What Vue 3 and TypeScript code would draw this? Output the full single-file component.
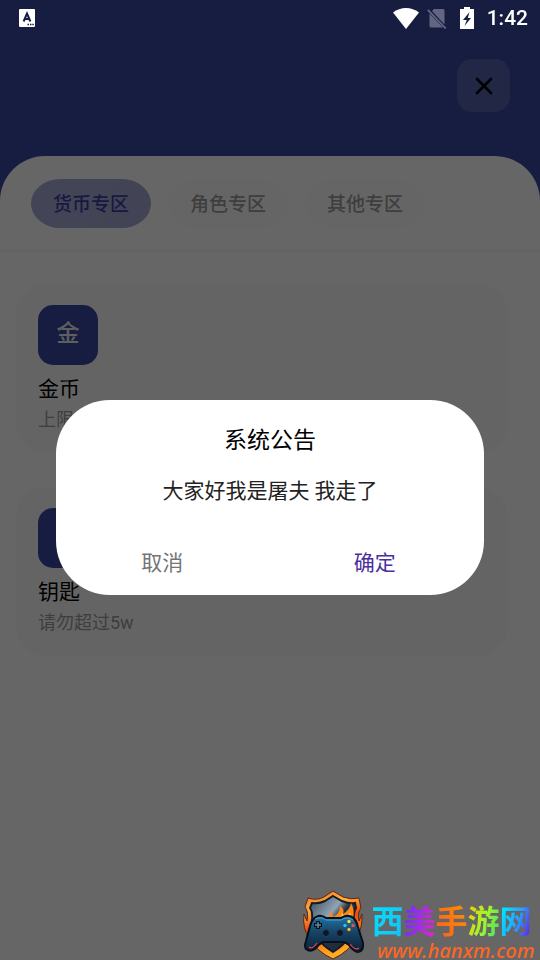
<script setup lang="ts">
import { ref } from 'vue'

interface Item {
  badge: string
  name: string
  hint: string
}

const tabs: string[] = ['货币专区', '角色专区', '其他专区']
const activeTab = ref(0)
const items: Item[] = [
  { badge: '金', name: '金币', hint: '上限999999' },
  { badge: '钥', name: '钥匙', hint: '请勿超过5w' },
]
const noticeOpen = ref(true)
</script>

<template>
  <div class="screen">
    <div class="status">
      <svg width="16" height="18" viewBox="0 0 16 18" aria-hidden="true">
        <rect width="16" height="18" rx="1" fill="#fff" />
        <path d="M4.600 12.500 8 4.600l3.400 7.900M5.800 10h4.400" fill="none" stroke="#171d42" stroke-width="2" />
        <path d="M8.500 15.500h1.500M11 15.500h1.500M13.300 15.500h1.500" stroke="#171d42" stroke-width="1.400" />
      </svg>
      <div class="status-right">
        <svg width="26" height="21" viewBox="0 0 26 21" aria-hidden="true">
          <path d="M0 4.500C7.500-1.500 18.500-1.500 26 4.500L13 21Z" fill="#fff" />
        </svg>
        <svg class="sim" width="20" height="21" viewBox="0 0 20 21" aria-hidden="true">
          <path d="M7 1H16Q17.500 1 17.500 2.500V16.500L5 3ZM2.500 5.500 16 19.500H4Q2.500 19.500 2.500 18Z" fill="#626681" />
          <path d="M.8 1.800 18.800 20.500" stroke="#626681" stroke-width="1.800" />
        </svg>
        <svg class="battery" width="14" height="22" viewBox="0 0 14 22" aria-hidden="true">
          <path d="M4 0h6v2h4v20H0V2h4Z" fill="#fff" />
          <path d="M9.500 5 3 13h3.800L4.500 19 11 11H7.800Z" fill="#171d42" />
        </svg>
        <span class="clock">1:42</span>
      </div>
    </div>

    <header class="header">
      <button class="close" type="button" aria-label="关闭">
        <svg width="18" height="18" viewBox="0 0 18 18" aria-hidden="true">
          <path d="M2 2 16 16M16 2 2 16" stroke="#000" stroke-width="2.600" stroke-linecap="round" />
        </svg>
      </button>
    </header>

    <main class="sheet">
      <nav class="tabs">
        <button
          v-for="(tab, i) in tabs"
          :key="tab"
          type="button"
          class="tab"
          :class="{ active: i === activeTab }"
          @click="activeTab = i"
        >{{ tab }}</button>
      </nav>
      <div class="list">
        <article v-for="item in items" :key="item.name" class="card">
          <div class="badge">{{ item.badge }}</div>
          <h2 class="name">{{ item.name }}</h2>
          <p class="hint">{{ item.hint }}</p>
        </article>
      </div>
    </main>

    <div v-if="noticeOpen" class="backdrop">
      <section class="dialog" role="dialog" aria-modal="true" aria-labelledby="notice-title">
        <h1 id="notice-title" class="title">系统公告</h1>
        <p class="message">大家好我是屠夫 我走了</p>
        <div class="actions">
          <button type="button" class="action" @click="noticeOpen = false">取消</button>
          <button type="button" class="action primary" @click="noticeOpen = false">确定</button>
        </div>
      </section>
    </div>

    <div class="brand">
      <svg width="62" height="70" viewBox="0 0 62 70" aria-hidden="true">
        <defs>
          <linearGradient id="fire" x1="0" y1="0" x2="0.300" y2="1">
            <stop offset="0" stop-color="#f36a12" />
            <stop offset=".3" stop-color="#ffb040" />
            <stop offset=".55" stop-color="#ee4b0c" />
            <stop offset="1" stop-color="#ffae22" />
          </linearGradient>
          <linearGradient id="steel" x1="0" y1="0" x2="1" y2="1">
            <stop offset="0" stop-color="#334454" />
            <stop offset=".38" stop-color="#91a5b6" />
            <stop offset=".5" stop-color="#263442" />
            <stop offset="1" stop-color="#182635" />
          </linearGradient>
          <linearGradient id="pad" x1="0" y1="0" x2="0" y2="1">
            <stop offset="0" stop-color="#2476a6" />
            <stop offset=".45" stop-color="#164466" />
            <stop offset="1" stop-color="#0c1e36" />
          </linearGradient>
        </defs>
        <path d="M31 1 41 7Q49 10 57 8L59 18Q55 23 57 31Q59 26 60 24Q61 38 54 48Q48 61 31 69Q14 61 8 49Q0 39 2 24L5 31Q7 22 3 17L6 8Q15 11 22 7Z" fill="url(#fire)" stroke="#612512" stroke-width="1" />
        <path d="M31 6 40 11Q47 14 53 13L54 18Q51 23 52 31Q52 49 31 62Q10 49 10 31Q11 22 8 18L10 13Q17 14 23 11Z" fill="url(#steel)" stroke="#181c25" stroke-width="2" />
        <path d="M22 31Q28 27 29 21Q31 24 31 27Q38 24 38 16Q43 19 41 24Q48 20 49 13Q53 19 51 29L55 34Z" fill="#ff8617" />
        <path d="M33 31Q40 29 40 23Q43 26 41 29Q47 27 48 22L50 32Z" fill="#ffd34b" />
        <path d="M14 27Q19 24 24 28H39Q44 24 50 27Q54 29 56 37L61 53Q62 61 56 62Q52 62 47 55Q44 52 40 52H23Q19 52 15 57Q9 63 4 59Q2 57 4 51L8 36Q10 29 14 27Z" fill="url(#pad)" stroke="#06101f" stroke-width="2" />
        <path d="M13 29Q19 26 24 30H39Q45 26 51 30" fill="none" stroke="#40a5d3" stroke-width="1" />
        <path d="M16 31v8M12 35h8" stroke="#09111e" stroke-width="4" />
        <path d="M16 32v6M13 35h6" stroke="#6b8799" stroke-width="1.500" />
        <circle cx="24" cy="43" r="3.500" fill="#0b172a" stroke="#24435c" />
        <circle cx="38" cy="43" r="3.500" fill="#0b172a" stroke="#24435c" />
        <circle cx="47" cy="31.500" r="1.700" fill="#ffdf2a" />
        <circle cx="43" cy="35.500" r="1.700" fill="#39bbf0" />
        <circle cx="51" cy="35.500" r="1.700" fill="#ff493a" />
        <circle cx="47" cy="39.500" r="1.700" fill="#f9b329" />
        <path d="M7 57Q10 60 15 53M48 54Q53 61 57 58" fill="none" stroke="#e84935" stroke-width="1.200" />
      </svg>
      <div class="brand-text">
        <div class="brand-name">
          <span class="cyan">西</span><span class="violet">美</span><span class="orange">手</span><span class="lime">游</span><span class="blue">网</span>
        </div>
        <div class="brand-url">www.hanxm.com</div>
      </div>
    </div>
  </div>
</template>

<style>
body {
  margin: 0;
  background: #fff;
}
</style>

<style scoped>
.screen {
  display: flex;
  flex-direction: column;
  min-height: 100vh;
  background: #3949a3;
  font-family: Roboto, "Noto Sans CJK SC", sans-serif;
}
button {
  border: 0;
  padding: 0;
  font-family: inherit;
  cursor: pointer;
}
h1, h2, p {
  margin: 0;
  font-weight: 400;
}
.status {
  position: relative;
  z-index: 2;
  display: flex;
  justify-content: space-between;
  align-items: center;
  height: 36px;
  padding: 0 12px 0 19px;
}
.status-right {
  display: flex;
  align-items: center;
}
.sim {
  margin-left: 8px;
}
.battery {
  margin-left: 13px;
}
.clock {
  margin-left: 13px;
  color: #fff;
  font-size: 21px;
  font-weight: 500;
  line-height: 36px;
}
.header {
  display: flex;
  justify-content: flex-end;
  padding: 23px 30px 44px;
}
.close {
  display: grid;
  place-items: center;
  width: 53px;
  height: 53px;
  border-radius: 15px;
  background: #5863b0;
}
.sheet {
  flex: 1;
  border-radius: 45px 45px 0 0;
  background: #fff;
}
.tabs {
  display: flex;
  gap: 17px;
  padding: 23px 31px 22px;
  border-bottom: 2px solid #f5f5f5;
}
.tab {
  width: 120px;
  height: 49px;
  padding-bottom: 2px;
  border-radius: 30px / 25px;
  background: #fcfcfc;
  color: #9c9c9c;
  font-size: 19px;
  font-weight: 500;
}
.tab.active {
  background: linear-gradient(110deg, #a9add8, #a5a8d0);
  color: #3a439f;
}
.list {
  display: flex;
  flex-direction: column;
  gap: 34px;
  padding: 32px 32px 32px 16px;
}
.card {
  padding: 21px 22px 20px;
  border-radius: 30px;
  background: #fafafa;
}
.badge {
  display: flex;
  justify-content: center;
  width: 60px;
  height: 60px;
  border-radius: 15px;
  background: #3949a3;
  color: #eee;
  font-size: 23px;
  font-weight: 500;
  line-height: 58px;
}
.name {
  margin-top: 10px;
  color: #000;
  font-size: 21px;
  line-height: 29px;
}
.hint {
  margin-top: 2px;
  color: #9c9c9c;
  font-size: 18px;
  line-height: 27px;
}
.backdrop {
  position: fixed;
  inset: 0;
  z-index: 1;
  display: grid;
  align-items: center;
  padding: 35px 56px 0;
  background: rgba(0, 0, 0, 0.6);
}
.dialog {
  padding: 24px 0 12px;
  border-radius: 54px;
  background: #fff;
  text-align: center;
}
.title {
  color: #000;
  font-size: 23px;
  line-height: 34px;
}
.message {
  margin-top: 18px;
  color: #222;
  font-size: 21px;
  line-height: 30px;
}
.actions {
  display: flex;
  margin-top: 35px;
  padding-right: 3px;
}
.action {
  flex: 1;
  height: 42px;
  padding-bottom: 2px;
  background: none;
  color: #757575;
  font-size: 21px;
}
.action.primary {
  color: #4a2f9e;
}
.brand {
  position: fixed;
  right: 5px;
  bottom: 0;
  z-index: 3;
  display: flex;
  align-items: flex-end;
  gap: 7px;
}
.brand-name {
  font-family: "Noto Sans CJK SC", sans-serif;
  font-size: 32px;
  font-weight: 700;
  line-height: 46px;
}
.brand-name span {
  background-clip: text;
  -webkit-background-clip: text;
  color: transparent;
}
.cyan { background-image: linear-gradient(120deg, #00e8ff, #12bdf5); }
.violet { background-image: linear-gradient(100deg, #5c31ff, #e627cc); }
.orange { background-image: linear-gradient(60deg, #ff5a1c, #ff9500); }
.lime { background-image: linear-gradient(110deg, #ffc400, #a5f52a, #31df70); }
.blue { background-image: linear-gradient(110deg, #00dfff 20%, #2b9eff 55%, #5937e8 85%); }
.brand-url {
  padding-left: 6px;
  color: #ff6726;
  font-family: "Open Sans", "Noto Sans", sans-serif;
  font-size: 20px;
  font-style: italic;
  font-weight: 600;
  line-height: 18px;
}
</style>
